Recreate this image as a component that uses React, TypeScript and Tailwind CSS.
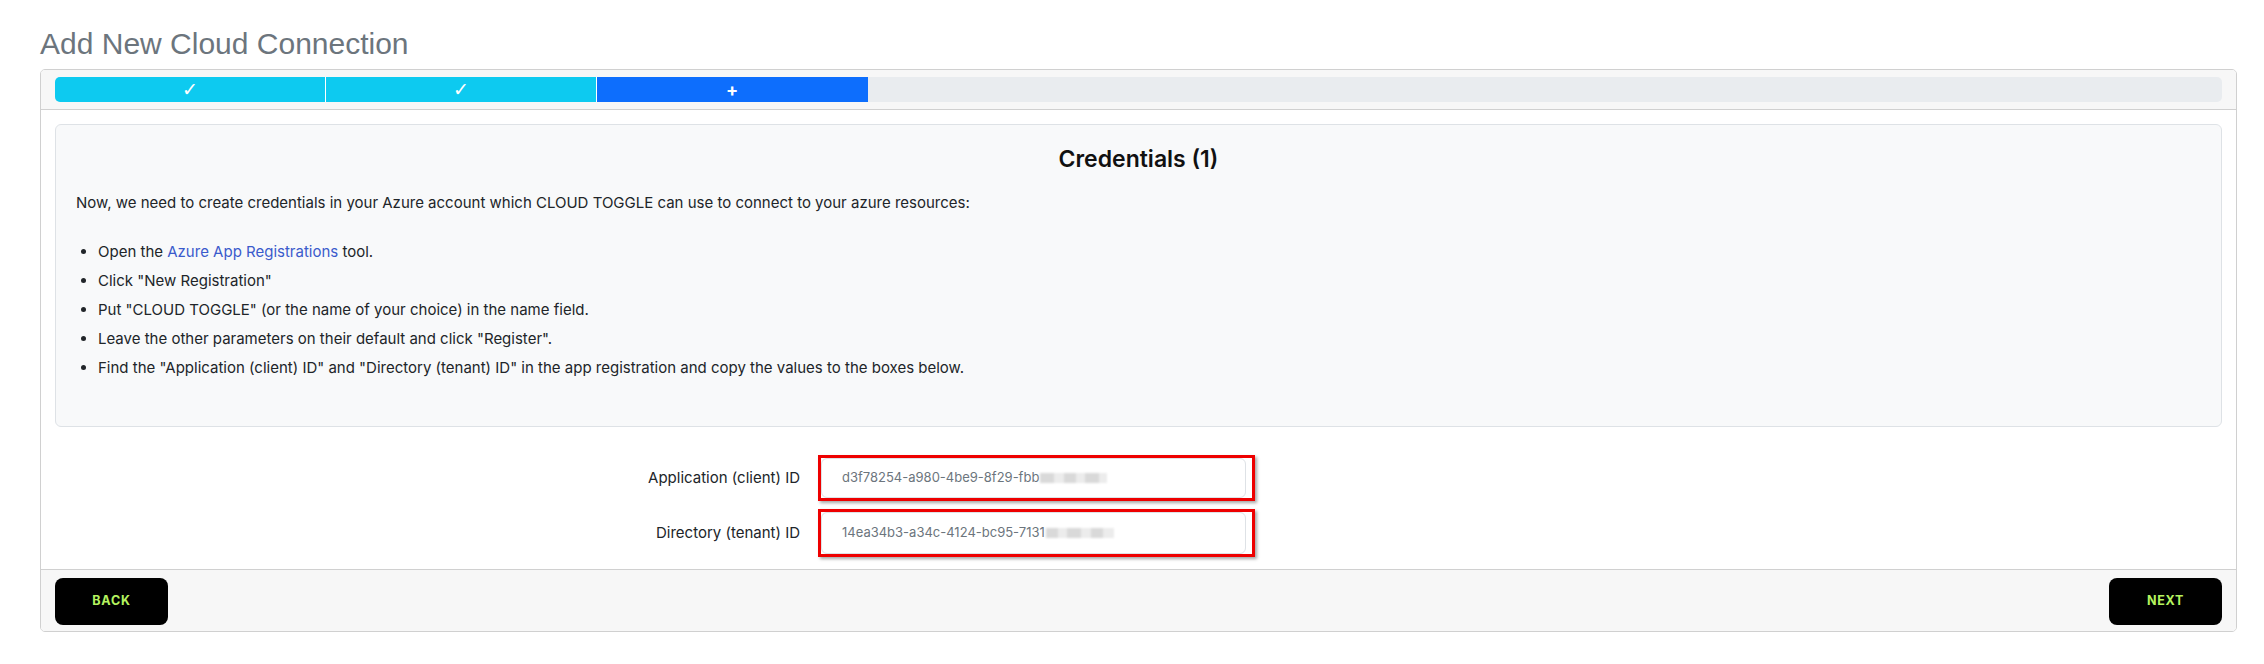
const STEPS = 8;

const steps = [
  { state: "done" },
  { state: "done" },
  { state: "current" },
];

function Blur({ widths }: { widths: number[] }) {
  // masked tail of the id, drawn as soft grey blocks
  return (
    <span className="inline-flex items-center ml-[1px] blur-[0.8px]">
      {widths.map((w, i) => (
        <span
          key={i}
          className={
            i % 2 === 0
              ? "inline-block h-[10px] bg-[#d9d9d9]"
              : "inline-block h-[10px] bg-[#ececec]"
          }
          style={{ width: w }}
        />
      ))}
    </span>
  );
}

function IdField({ label, value, mask, h }: { label: string; value: string; mask: number[]; h: string }) {
  return (
    <div className="flex items-center">
      <div className="w-[745px] text-right text-[15px] text-[#212529]">{label}</div>
      <div className={`ml-[18px] w-[437px] ${h} border-[3px] border-[#ee0000] shadow-[2px_2px_3px_rgba(0,0,0,0.35)] flex`}>
        <div className="flex-1 mr-[6px] bg-white border border-[#dee2e6] rounded-[6px] flex items-center pl-[20px] text-[13px] text-[#6c757d]">
          <span>{value}</span>
          <Blur widths={mask} />
        </div>
      </div>
    </div>
  );
}

export default function App() {
  return (
    <div className="min-h-screen bg-white font-['Inter',sans-serif] text-[#212529]">
      <div className="pl-[40px] pr-[27px] pt-[26px]">
        <h1 className="font-['Liberation_Sans',Arial,sans-serif] text-[30px] leading-[36px] text-[#6c757d] mb-[7px]">
          Add New Cloud Connection
        </h1>

        <div className="border border-[#d0d0d0] rounded-[5px] overflow-hidden">
          <div className="bg-[#f7f7f7] border-b border-[#d0d0d0] px-[14px] py-[7px]">
            <div className="flex h-[25px] rounded-[5px] bg-[#e9ecef] overflow-hidden">
              {steps.map((s, i) => (
                <div
                  key={i}
                  className={
                    s.state === "done"
                      ? "h-full border-r border-white bg-[#0dcaf0] flex items-center justify-center text-white text-[19px] font-light font-['DejaVu_Sans',sans-serif]"
                      : "h-full bg-[#0d6efd] flex items-center justify-center text-white text-[18px] font-bold"
                  }
                  style={{ width: `${100 / STEPS}%` }}
                >
                  {s.state === "done" ? "✓" : "+"}
                </div>
              ))}
            </div>
          </div>

          <div className="bg-white px-[14px] pt-[14px] pb-[12px]">
            <div className="bg-[#f8f9fa] border border-[#dee2e6] rounded-[6px] px-[20px] pt-[20px] pb-[48px]">
              <h3 className="text-center text-[23px] leading-[28px] font-semibold text-[#111]">Credentials (1)</h3>
              <p className="mt-[19px] text-[15px] leading-[21px]">
                Now, we need to create credentials in your Azure account which CLOUD TOGGLE can use to connect to your azure resources:
              </p>
              <ul className="mt-[28px] list-disc pl-[22px] text-[15px] leading-[21px] space-y-[8px]">
                <li>
                  Open the <a className="text-[#3b5bcc]">Azure App Registrations</a> tool.
                </li>
                <li>Click "New Registration"</li>
                <li>Put "CLOUD TOGGLE" (or the name of your choice) in the name field.</li>
                <li>Leave the other parameters on their default and click "Register".</li>
                <li>
                  Find the "Application (client) ID" and "Directory (tenant) ID" in the app registration and copy the values to the boxes below.
                </li>
              </ul>
            </div>

            <div className="mt-[28px] flex flex-col gap-[8px]">
              <IdField label="Application (client) ID" value="d3f78254-a980-4be9-8f29-fbb" mask={[14, 10, 12, 9, 14, 8]} h="h-[46px]" />
              <IdField label="Directory (tenant) ID" value="14ea34b3-a34c-4124-bc95-7131" mask={[12, 9, 14, 10, 12, 11]} h="h-[48px]" />
            </div>
          </div>

          <div className="bg-[#f7f7f7] border-t border-[#d0d0d0] px-[14px] pt-[8px] pb-[6px] flex justify-between">
            <button className="w-[113px] h-[47px] rounded-[8px] bg-black text-[#b5f35f] text-[12.5px] font-bold tracking-[0.06em]">
              BACK
            </button>
            <button className="w-[113px] h-[47px] rounded-[8px] bg-black text-[#b5f35f] text-[12.5px] font-bold tracking-[0.06em]">
              NEXT
            </button>
          </div>
        </div>
      </div>
    </div>
  );
}
